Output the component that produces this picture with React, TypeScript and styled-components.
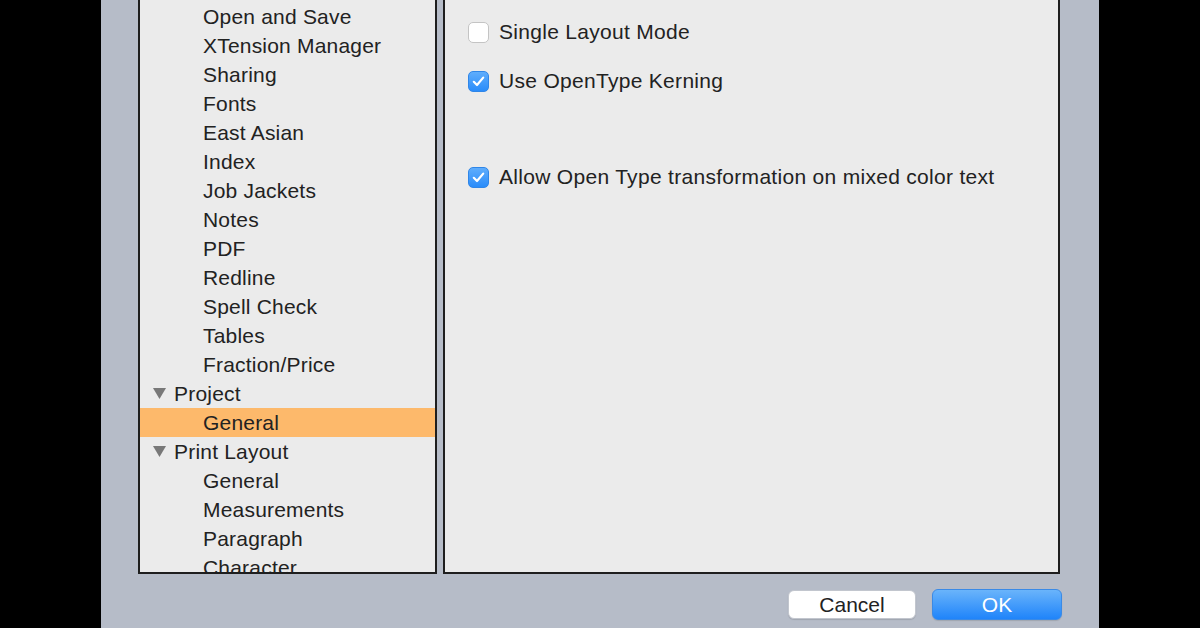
import React from "react";
import styled, { createGlobalStyle } from "styled-components";

const Global = createGlobalStyle`
  html, body { margin: 0; padding: 0; background: #000; overflow: hidden; }
  body { font-family: "Liberation Sans", Arial, sans-serif; }
  #root { width: 1200px; height: 628px; overflow: hidden; }
`;

const Dialog = styled.div`
  margin-top: -40px;
  margin-left: 101px;
  width: 998px;
  height: 668px;
  background: #b6bcc8;
  box-sizing: border-box;
  padding: 0 37px 0 37px;
  display: flex;
  flex-direction: column;
`;

const Panes = styled.div`
  display: grid;
  grid-template-columns: 299px 617px;
  column-gap: 6px;
  height: 614px;
`;

const Sidebar = styled.div`
  box-sizing: border-box;
  border: 2px solid #1e1e1e;
  background: #ebebeb;
  overflow: hidden;
  padding-top: 40px;
`;

const Row = styled.div<{ $level: number; $selected?: boolean }>`
  height: 29px;
  display: flex;
  align-items: center;
  padding-left: ${(p) => (p.$level === 0 ? 13 : 63)}px;
  background: ${(p) => (p.$selected ? "#fdb96b" : "transparent")};
  color: #222;
  font-size: 21px;
  letter-spacing: 0.2px;
  white-space: nowrap;
`;

const Disclosure = styled.svg`
  width: 13px;
  height: 11px;
  margin-right: 8px;
  flex: none;
`;

const Content = styled.div`
  box-sizing: border-box;
  border: 2px solid #1e1e1e;
  background: #ebebeb;
  padding: 59px 0 0 23px;
  display: flex;
  flex-direction: column;
  gap: 27px;
`;

const CheckRow = styled.label`
  display: flex;
  align-items: center;
  height: 22px;
  gap: 10px;
  font-size: 21px;
  letter-spacing: 0.3px;
  color: #222;
  white-space: nowrap;
`;

const Box = styled.span<{ $checked?: boolean }>`
  box-sizing: border-box;
  width: 21px;
  height: 21px;
  border-radius: 5px;
  flex: none;
  display: flex;
  align-items: center;
  justify-content: center;
  background: ${(p) =>
    p.$checked ? "linear-gradient(#5fadfc, #2a8cfa)" : "#ffffff"};
  border: 1px solid ${(p) => (p.$checked ? "#2f86e8" : "#c4c4c4")};
`;

const Spacer = styled.div`
  height: 20px;
`;

const Buttons = styled.div`
  display: flex;
  justify-content: flex-end;
  align-items: center;
  gap: 16px;
  margin-top: 15px;
`;

const Button = styled.button<{ $primary?: boolean }>`
  font-family: "Liberation Sans", Arial, sans-serif;
  font-size: 21px;
  box-sizing: border-box;
  width: ${(p) => (p.$primary ? 130 : 128)}px;
  height: ${(p) => (p.$primary ? 31 : 29)}px;
  border-radius: 6px;
  display: flex;
  align-items: center;
  justify-content: center;
  padding: 0;
  color: ${(p) => (p.$primary ? "#ffffff" : "#222")};
  background: ${(p) =>
    p.$primary ? "linear-gradient(#6ab4fb, #1f84fa)" : "#ffffff"};
  border: 1px solid ${(p) => (p.$primary ? "#3a8ae6" : "#c2c6ce")};
  box-shadow: 0 1px 1px rgba(0, 0, 0, 0.12);
`;

type Item = { label: string; level: number; selected?: boolean };

const items: Item[] = [
  { label: "Open and Save", level: 1 },
  { label: "XTension Manager", level: 1 },
  { label: "Sharing", level: 1 },
  { label: "Fonts", level: 1 },
  { label: "East Asian", level: 1 },
  { label: "Index", level: 1 },
  { label: "Job Jackets", level: 1 },
  { label: "Notes", level: 1 },
  { label: "PDF", level: 1 },
  { label: "Redline", level: 1 },
  { label: "Spell Check", level: 1 },
  { label: "Tables", level: 1 },
  { label: "Fraction/Price", level: 1 },
  { label: "Project", level: 0 },
  { label: "General", level: 1, selected: true },
  { label: "Print Layout", level: 0 },
  { label: "General", level: 1 },
  { label: "Measurements", level: 1 },
  { label: "Paragraph", level: 1 },
  { label: "Character", level: 1 },
];

const Check = () => (
  <svg width="13" height="11" viewBox="0 0 13 11">
    <path
      d="M1.8 5.8 L5 9 L11.2 1.6"
      fill="none"
      stroke="#fff"
      strokeWidth="2.2"
      strokeLinecap="round"
      strokeLinejoin="round"
    />
  </svg>
);

export default function App() {
  return (
    <>
      <Global />
      <Dialog>
        <Panes>
          <Sidebar>
            {items.map((it, i) => (
              <Row key={i} $level={it.level} $selected={it.selected}>
                {it.level === 0 && (
                  <Disclosure viewBox="0 0 13 11">
                    <polygon points="0,0 13,0 6.5,11" fill="#787878" />
                  </Disclosure>
                )}
                {it.label}
              </Row>
            ))}
          </Sidebar>
          <Content>
            <CheckRow>
              <Box />
              Single Layout Mode
            </CheckRow>
            <CheckRow>
              <Box $checked>
                <Check />
              </Box>
              Use OpenType Kerning
            </CheckRow>
            <Spacer />
            <CheckRow>
              <Box $checked>
                <Check />
              </Box>
              Allow Open Type transformation on mixed color text
            </CheckRow>
          </Content>
        </Panes>
        <Buttons>
          <Button>Cancel</Button>
          <Button $primary>OK</Button>
        </Buttons>
      </Dialog>
    </>
  );
}
